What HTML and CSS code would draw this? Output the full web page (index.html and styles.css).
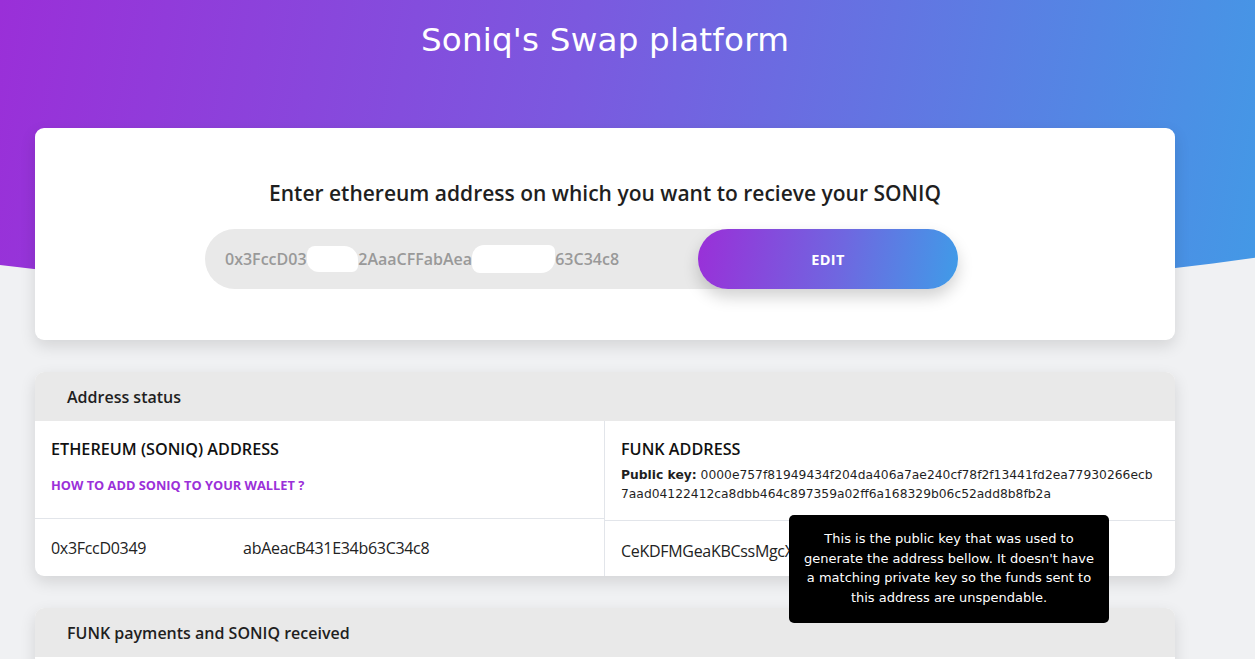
FILE: index.html
```html
<!DOCTYPE html>
<html lang="en">
<head>
<meta charset="utf-8">
<title>Soniq's Swap platform</title>
<link rel="stylesheet" href="styles.css">
</head>
<body>
<header class="hero">
  <h1 class="hero-title">Soniq's Swap platform</h1>
</header>
<main class="page">
  <section class="card card-enter">
    <h2 class="enter-title">Enter ethereum address on which you want to recieve your SONIQ</h2>
    <div class="enter-row">
      <div class="address-input">0x3FccD03<span class="redact r1">49c8fB</span>2AaaCFFabAea<span class="redact r2">cB431E34b</span>63C34c8</div>
      <button class="edit-btn" type="button">EDIT</button>
    </div>
  </section>

  <section class="card card-table">
    <div class="card-head">Address status</div>
    <div class="status-grid">
      <div class="status-col">
        <div class="cell cell-top cell-top-left">
          <div class="cell-title">ETHEREUM (SONIQ) ADDRESS</div>
          <a class="wallet-link" href="#">HOW TO ADD SONIQ TO YOUR WALLET ?</a>
        </div>
        <div class="cell cell-bottom">
          <div class="cell-value">0x3FccD0349<span class="redact r3">c8fB2AaaCFF</span>abAeacB431E34b63C34c8</div>
        </div>
      </div>
      <div class="status-col status-col-right">
        <div class="cell cell-top cell-top-right">
          <div class="cell-title">FUNK ADDRESS</div>
          <div class="pubkey"><span class="pk-line"><b>Public key:</b> 0000e757f81949434f204da406a7ae240cf78f2f13441fd2ea77930266ecb</span><span class="pk-line">7aad04122412ca8dbb464c897359a02ff6a168329b06c52add8b8fb2a</span></div>
        </div>
        <div class="cell cell-bottom cell-bottom-right">
          <div class="cell-value funk-value">CeKDFMGeaKBCssMgcXe7Tq2hBv9Lw</div>
          <div class="tooltip">This is the public key that was used to generate the address bellow. It doesn't have a matching private key so the funds sent to this address are unspendable.</div>
        </div>
      </div>
    </div>
  </section>

  <section class="card card-table card-payments">
    <div class="card-head">FUNK payments and SONIQ received</div>
  </section>
</main>
</body>
</html>
```

FILE: styles.css
```css
html, body {
  margin: 0;
  padding: 0;
}

body {
  background: #f0f1f3;
  font-family: "Open Sans", "Noto Sans", sans-serif;
  color: #1d1d1f;
  height: 659px;
  overflow: hidden;
}

.hero {
  height: 300px;
  background: linear-gradient(100deg, #9a2fd8 0%, #7b59df 45%, #4399e6 100%);
  clip-path: ellipse(1300px 310px at 600px -10px);
  padding-top: 19px;
  box-sizing: border-box;
}

.hero-title {
  width: 1140px;
  margin: 0 0 0 35px;
  text-align: center;
  color: #ffffff;
  font-family: "DejaVu Sans", sans-serif;
  font-weight: 400;
  font-size: 32.6px;
  line-height: 42px;
  letter-spacing: 0.2px;
}

.page {
  position: relative;
  z-index: 1;
  width: 1140px;
  margin: -172px 0 0 35px;
  display: flex;
  flex-direction: column;
  gap: 32px;
}

.card {
  background: #ffffff;
  border-radius: 9px;
  box-shadow: 0 6px 16px rgba(0, 0, 0, 0.12);
}

.card-enter {
  padding: 50px 0 51px;
  height: 212px;
  box-sizing: border-box;
}

.enter-title {
  margin: 0 0 21px;
  text-align: center;
  font-size: 21px;
  line-height: 30px;
  font-weight: 600;
  color: #1f1f1f;
}

.enter-row {
  display: flex;
  margin-left: 170px;
  width: 753px;
  height: 60px;
}

.address-input {
  flex: 0 0 525px;
  background: #e9e9e9;
  border-radius: 30px 0 0 30px;
  padding-left: 20px;
  box-sizing: border-box;
  display: flex;
  align-items: center;
  color: #999999;
  font-size: 16px;
  font-weight: 600;
  white-space: nowrap;
  overflow: hidden;
  margin-right: -32px;
}

.redact {
  background: #ffffff;
  color: #ffffff;
  border-radius: 10px;
}

.r1 { padding: 2px 0; border-radius: 8px 14px 6px 12px; }
.r2 { padding: 3px 0; border-radius: 12px 6px 14px 8px; }
.r3 { padding: 4px 2px; border-radius: 4px; }

.edit-btn {
  flex: 0 0 260px;
  position: relative;
  border: 0;
  border-radius: 30px;
  background: linear-gradient(100deg, #9a2fd8 0%, #6f67e0 55%, #3f9ce8 100%);
  color: #ffffff;
  font-family: "Open Sans", sans-serif;
  font-weight: 700;
  font-size: 14.5px;
  letter-spacing: 0.3px;
  box-shadow: 0 8px 16px rgba(0, 0, 0, 0.18);
  cursor: pointer;
}

.card-head {
  background: #e9e9e9;
  height: 49px;
  display: flex;
  align-items: center;
  padding-left: 32px;
  font-size: 16px;
  font-weight: 600;
  color: #1f1f1f;
  border-radius: 9px 9px 0 0;
}

.card-table {
  border-radius: 9px;
}

.status-grid {
  display: grid;
  grid-template-columns: 569px 1fr;
}

.status-col {
  display: flex;
  flex-direction: column;
}

.status-col-right {
  border-left: 1px solid #e2e5ea;
}

.cell {
  padding: 0 16px;
  box-sizing: border-box;
}

.cell-top {
  border-bottom: 1px solid #e2e5ea;
}

.cell-top-left {
  height: 98px;
  padding-top: 17px;
}

.cell-top-right {
  height: 100px;
  padding-top: 17px;
}

.cell-title {
  font-size: 16.2px;
  line-height: 22px;
  font-weight: 600;
  color: #111111;
}

.wallet-link {
  display: block;
  margin-top: 17px;
  font-size: 12.8px;
  line-height: 16px;
  font-weight: 700;
  color: #9b30d9;
  text-decoration: none;
}

.pubkey {
  margin-top: 6px;
  font-family: "DejaVu Sans", sans-serif;
  font-size: 12.3px;
  line-height: 19px;
  color: #1f1f1f;
}

.pk-line {
  display: block;
  white-space: nowrap;
}

.cell-bottom {
  height: 57px;
  display: flex;
  align-items: center;
}

.cell-bottom-right {
  position: relative;
  height: 55px;
  padding-top: 4px;
}

.cell-value {
  font-size: 16px;
  color: #222222;
  white-space: nowrap;
  letter-spacing: -0.3px;
}

.funk-value {
  font-family: "Open Sans", sans-serif;
}

.tooltip {
  position: absolute;
  left: 184px;
  top: -6px;
  width: 320px;
  height: 108px;
  box-sizing: border-box;
  padding: 14px 10px 0;
  background: #000000;
  color: #ffffff;
  border-radius: 5px;
  font-family: "DejaVu Sans", sans-serif;
  font-size: 13px;
  line-height: 19.5px;
  text-align: center;
  z-index: 2;
}

.card-payments {
  height: 60px;
  border-radius: 9px 9px 0 0;
}
```
